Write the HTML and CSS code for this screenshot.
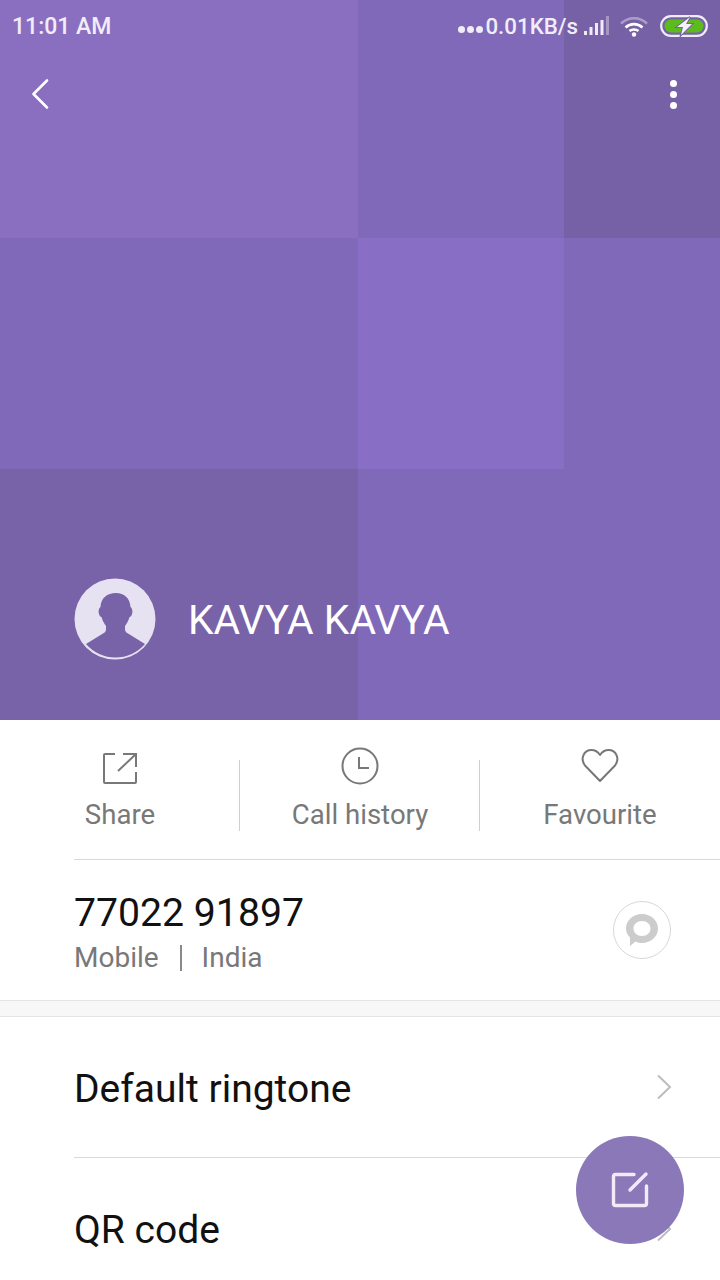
FILE: index.html
```html
<!DOCTYPE html>
<html lang="en">
<head>
    <meta charset="UTF-8">
    <meta name="viewport" content="width=device-width, initial-scale=1.0">
    <title>Contact</title>
    <link rel="stylesheet" href="styles.css">
</head>
<body>
    <div class="screen">
        <header class="hero">
            <div class="mosaic">
                <div class="tile tile-light"></div>
                <div class="tile tile-mid"></div>
                <div class="tile tile-dark"></div>
                <div class="tile tile-mid2"></div>
                <div class="tile tile-bright"></div>
                <div class="tile tile-mid"></div>
                <div class="tile tile-dark2"></div>
                <div class="tile tile-wide"></div>
            </div>

            <div class="status-bar">
                <span class="clock">11:01 AM</span>
                <div class="status-right">
                    <span class="dots"><i></i><i></i><i></i></span>
                    <span class="speed">0.01KB/s</span>
                    <svg class="signal" width="26" height="20" viewBox="0 0 26 20">
                        <rect x="0" y="15" width="3" height="4" fill="#efe9f8"/>
                        <rect x="5.5" y="11" width="3" height="8" fill="#efe9f8"/>
                        <rect x="11" y="7" width="3" height="12" fill="#efe9f8"/>
                        <rect x="16.5" y="4" width="3" height="15" fill="#efe9f8"/>
                        <rect x="22" y="0" width="3" height="19" fill="#efe9f8" opacity="0.4"/>
                    </svg>
                    <svg class="wifi" width="30" height="22" viewBox="0 0 30 22">
                        <path d="M2 8.5C9.5 1.5 20.5 1.5 28 8.5" fill="none" stroke="#efe9f8" stroke-opacity="0.45" stroke-width="2.6"/>
                        <path d="M6.5 12.5C11.5 8 18.5 8 23.5 12.5" fill="none" stroke="#fff" stroke-width="2.6"/>
                        <path d="M10.5 16C13 14 17 14 19.5 16" fill="none" stroke="#fff" stroke-width="2.6"/>
                        <circle cx="15" cy="19.5" r="2.2" fill="#fff"/>
                    </svg>
                    <svg class="battery" width="48" height="22" viewBox="0 0 48 22">
                        <rect x="1.2" y="1.2" width="45.6" height="19.6" rx="9.8" fill="none" stroke="#f1edf8" stroke-width="2.2"/>
                        <rect x="4.5" y="4.5" width="39" height="13" rx="6.5" fill="#5cbc1c"/>
                        <path d="M30 2L17 12H23L21 20L32 9H26Z" fill="#f4f1fa" stroke="#7660a6" stroke-width="2" paint-order="stroke"/>
                    </svg>
                </div>
            </div>

            <div class="toolbar">
                <svg width="20" height="32" viewBox="0 0 20 32">
                    <path d="M17 2.5L3.5 16L17 29.5" fill="none" stroke="#fff" stroke-width="2.6" stroke-linecap="round" stroke-linejoin="round"/>
                </svg>
                <span class="more"><i></i><i></i><i></i></span>
            </div>

            <div class="profile">
                <svg class="avatar" width="82" height="82" viewBox="0 0 82 82">
                    <circle cx="41" cy="41" r="40.5" fill="#e7e2f1"/>
                    <path d="M42 15C50 15 56 20 56.500 29C58 30 59 33 58 36C57.500 38 56.500 39 55.500 39C54.500 43 52.500 46 51 48L51 51C51 53 52 54.500 54 55.500L71 66A39 39 0 0 1 12 66L29 55.500C31 54.500 32 53 32 51L32 48C30.500 46 28.500 43 27.500 39C26.500 39 25.500 38 25 36C24 33 25 30 26.500 29C27 20 33 15 42 15Z" fill="#7862a8"/>
                </svg>
                <h1 class="name">KAVYA KAVYA</h1>
            </div>
        </header>

        <section class="actions">
            <div class="action">
                <svg width="36" height="38" viewBox="0 0 36 38">
                    <path d="M13 7H3Q2 7 2 8V35Q2 36 3 36H33Q34 36 34 35V25" fill="none" stroke="#787878" stroke-width="2"/>
                    <path d="M16 24L34 7M21 7H34V20" fill="none" stroke="#787878" stroke-width="2"/>
                </svg>
                <span>Share</span>
            </div>
            <div class="action">
                <svg width="38" height="38" viewBox="0 0 38 38">
                    <circle cx="19" cy="19" r="17.500" fill="none" stroke="#787878" stroke-width="2"/>
                    <path d="M18 10V21H28" fill="none" stroke="#787878" stroke-width="2"/>
                </svg>
                <span>Call history</span>
            </div>
            <div class="action">
                <svg width="38" height="38" viewBox="0 0 38 38">
                    <path d="M19 34L4 18.500C-1 12 2.500 3 10.500 3C14 3 17 5 19 8C21 5 24 3 27.500 3C35.500 3 39 12 34 18.500Z" fill="none" stroke="#787878" stroke-width="2" stroke-linejoin="round"/>
                </svg>
                <span>Favourite</span>
            </div>
        </section>

        <section class="phone-row">
            <div>
                <div class="phone-number">77022 91897</div>
                <div class="phone-meta"><span>Mobile</span><span class="sep"></span><span>India</span></div>
            </div>
            <div class="msg-btn">
                <svg width="34" height="34" viewBox="0 0 34 34">
                    <path fill-rule="evenodd" d="M17 1C26 1 33 7.500 33 15.500C33 23.500 26 30 17 30C14.500 30 12.500 29.500 10.500 28.500L5 33L5 24.500C2.500 22 1 19 1 15.500C1 7.500 8 1 17 1ZM17 8C12 8 8.500 11.300 8.500 15.500C8.500 19.700 12 23 17 23C22 23 25.500 19.700 25.500 15.500C25.500 11.300 22 8 17 8Z" fill="#cccccc"/>
                </svg>
            </div>
        </section>

        <div class="spacer"></div>

        <section class="settings">
            <div class="setting">
                <span>Default ringtone</span>
                <svg class="chevron" width="16" height="26" viewBox="0 0 16 26"><path d="M2 1.500L14 13L2 24.500" fill="none" stroke="#bdbdbd" stroke-width="2"/></svg>
            </div>
            <div class="setting">
                <span>QR code</span>
                <svg class="chevron" width="16" height="26" viewBox="0 0 16 26"><path d="M2 1.500L14 13L2 24.500" fill="none" stroke="#bdbdbd" stroke-width="2"/></svg>
            </div>
        </section>

        <button class="fab">
            <svg width="38" height="38" viewBox="0 0 38 38">
                <path d="M23 3.500H4.500Q2.500 3.500 2.500 5.500V32.500Q2.500 34.500 4.500 34.500H33.500Q35.500 34.500 35.500 32.500V15" fill="none" stroke="#f1ebf8" stroke-width="3.400" stroke-linecap="round"/>
                <path d="M19 19L35 3" fill="none" stroke="#f1ebf8" stroke-width="3.400" stroke-linecap="round"/>
            </svg>
        </button>
    </div>
</body>
</html>
```

FILE: styles.css
```css
* { box-sizing: border-box; }
html, body { margin: 0; padding: 0; }
body { font-family: Roboto, "Noto Sans", sans-serif; background: #fff; }
.screen { position: relative; width: 720px; height: 1280px; overflow: hidden; background: #fff; }

/* purple header */
.hero { position: relative; height: 720px; display: flex; flex-direction: column; }
.mosaic { position: absolute; inset: 0; display: grid; grid-template-columns: 358px 206px 156px; grid-template-rows: 238px 231px 251px; }
.tile-light { background: #8a6fc0; }
.tile-mid { background: #8069b8; }
.tile-mid2 { background: #8069b8; }
.tile-dark { background: #7660a6; }
.tile-dark2 { background: #7862a8; }
.tile-bright { background: #886fc5; }
.tile-wide { background: #8069b8; grid-column: span 2; }

.status-bar, .toolbar, .profile { position: relative; }
.status-bar { height: 52px; padding: 0 12px 0 12px; display: flex; align-items: center; justify-content: space-between; color: #f1edf8; }
.clock { font-size: 23px; font-weight: 500; }
.status-right { display: flex; align-items: center; }
.dots { display: flex; gap: 2px; margin-right: 2px; margin-top: 6px; }
.dots i { width: 7px; height: 7px; border-radius: 50%; background: #f1edf8; }
.speed { font-size: 22.3px; font-weight: 500; }
.signal { margin-left: 6px; }
.wifi { margin-left: 9px; }
.battery { margin-left: 11px; }

.toolbar { height: 84px; padding: 0 43px 0 30px; display: flex; align-items: center; justify-content: space-between; }
.more { display: flex; flex-direction: column; gap: 4px; }
.more i { width: 7px; height: 7px; border-radius: 50%; background: #fff; }

.profile { margin-top: auto; margin-bottom: 60px; padding-left: 74px; display: flex; align-items: center; gap: 32px; }
.avatar { display: block; }
.name { margin: 2px 0 0; font-size: 40.8px; font-weight: 400; color: #fff; }

/* share / history / favourite */
.actions { height: 140px; display: flex; position: relative; }
.actions::after { content: ""; position: absolute; left: 74px; right: 0; bottom: 0; height: 1px; background: #d9d9d9; }
.action { width: 240px; display: flex; flex-direction: column; align-items: center; padding-top: 27px; position: relative; color: #787878; font-size: 27.6px; }
.action svg { display: block; }
.action span { margin-top: 12px; line-height: 36px; }
.action + .action::before { content: ""; position: absolute; left: -1px; top: 40px; height: 71px; width: 1px; background: #cfcfcf; }

.phone-row { height: 140px; padding: 4px 49px 0 74px; display: flex; align-items: center; justify-content: space-between; }
.phone-number { font-size: 39.2px; color: #111; line-height: 46px; }
.phone-meta { display: flex; align-items: center; font-size: 28px; color: #787878; margin-top: 6px; line-height: 32px; }
.sep { width: 2px; height: 26px; background: #8a8a8a; margin: 0 20px 0 21px; }
.msg-btn { width: 58px; height: 58px; margin-top: -4px; border: 1px solid #d8d8d8; border-radius: 50%; display: flex; align-items: center; justify-content: center; }

.spacer { height: 17px; background: #f7f7f7; border-top: 1px solid #e4e4e4; border-bottom: 1px solid #e4e4e4; }

.setting { height: 141px; margin-left: 74px; padding-right: 48px; display: flex; align-items: center; justify-content: space-between; font-size: 39px; color: #111; border-bottom: 1px solid #d9d9d9; }
.setting span { margin-top: 3px; }
.setting:last-child { border-bottom: 0; }

.fab { position: absolute; left: 576px; top: 1136px; width: 108px; height: 108px; padding: 0; border: 0; border-radius: 50%; background: #8a78b8; display: flex; align-items: center; justify-content: center; }
```
